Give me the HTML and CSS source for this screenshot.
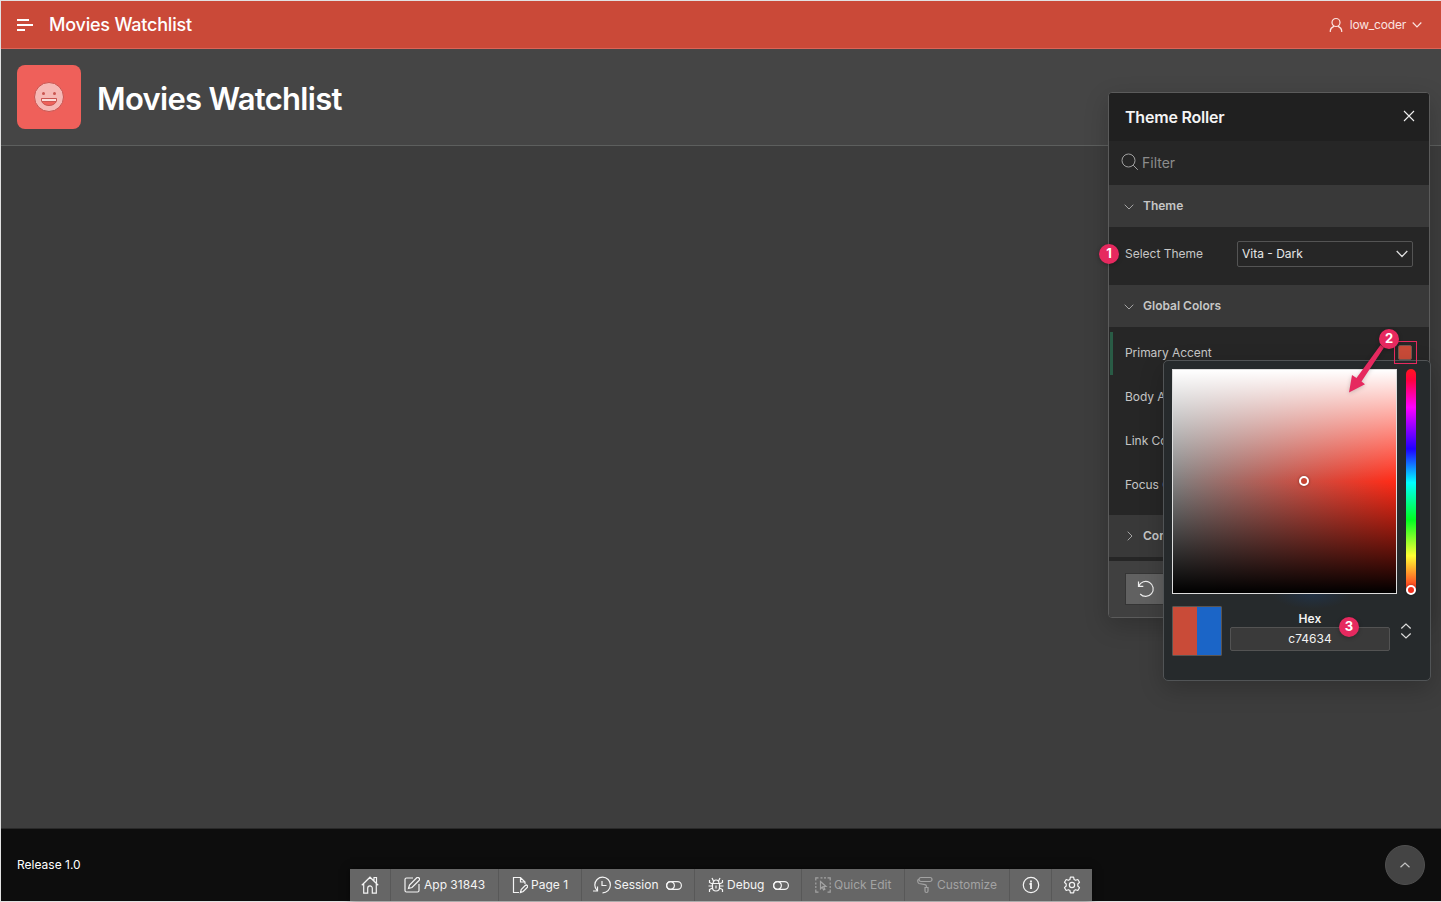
FILE: index.html
```html
<!DOCTYPE html>
<html lang="en">
<head>
<meta charset="utf-8">
<title>Movies Watchlist</title>
<link rel="stylesheet" href="styles.css">
</head>
<body>
<div class="page">
  <header class="topbar">
    <svg class="menu-icon" width="16" height="12" viewBox="0 0 16 12"><path d="M0 1h12M0 6h16M0 11h8" stroke="#fff" stroke-width="2"/></svg>
    <span class="app-name">Movies Watchlist</span>
    <div class="user">
      <svg width="14" height="16" viewBox="0 0 14 16" fill="none" stroke="currentColor" stroke-width="1.200"><circle cx="7" cy="5.500" r="4"/><path d="M1.300 15v-1.300c0-2 1.300-3.300 3.800-4.600M12.700 15v-1.300c0-2-1.300-3.300-3.800-4.600"/></svg>
      <span class="user-name">low_coder</span>
      <svg width="10" height="7" viewBox="0 0 10 7" fill="none" stroke="currentColor" stroke-width="1.200"><path d="M.7 1.500L5 5.800l4.300-4.300"/></svg>
    </div>
  </header>
  <section class="hero">
    <div class="hero-icon">
      <svg width="30" height="30" viewBox="0 0 30 30"><circle cx="15" cy="15" r="14.500" fill="#f6b8b5" stroke="#c95450"/><circle cx="9.500" cy="11.500" r="1.500" fill="#c95450"/><circle cx="20.500" cy="11.500" r="1.500" fill="#c95450"/><path d="M7.500 16.500h15v1.500a7.500 5.500 0 0 1-15 0z" fill="#ef615b" stroke="#c95450"/><path d="M8 17h14v2H8z" fill="#fbdcda"/><path d="M8 19.500h14" stroke="#c95450" stroke-width=".8"/></svg>
    </div>
    <h1 class="hero-title">Movies Watchlist</h1>
  </section>
  <main class="content"></main>
  <footer class="footer">
    <span class="release">Release 1.0</span>
    <button class="to-top"><svg width="10" height="6" viewBox="0 0 10 6" fill="none" stroke="#c4c4c4" stroke-width="1.200"><path d="M.5 5.300L5 1l4.500 4.300"/></svg></button>
  </footer>
</div>

<nav class="devbar">
  <div class="tool tool-home"><svg width="18" height="18" viewBox="0 0 18 18"><path d="M.8 9.300L9 1.200l8.200 8.100M2.700 8v9.200h4v-5a2.300 2.300 0 0 1 4.600 0v5h4V8M13 4.800V1.500h2.500v5.700"/></svg></div>
  <div class="tool tool-app"><svg width="16" height="16" viewBox="0 0 16 16"><path d="M9 1H2.500A1.500 1.500 0 0 0 1 2.500v11A1.500 1.500 0 0 0 2.500 15h11a1.500 1.500 0 0 0 1.500-1.500V7M4.500 11.500l1-3.500 7-7a1.500 1.500 0 0 1 2.500 2.500l-7 7z"/></svg><span>App 31843</span></div>
  <div class="tool tool-page"><svg width="16" height="18" viewBox="0 0 16 18"><path d="M7 16.500H1.500v-15h7L13 6v2M8.500 1.500V6H13M8.500 16.500l.7-3 4-4a1.300 1.300 0 0 1 2 2l-4 4z"/></svg><span>Page 1</span></div>
  <div class="tool tool-session"><svg width="18" height="18" viewBox="0 0 18 18"><path d="M9.500 16.800A7.800 7.800 0 1 0 1.800 9c0 2.200.8 4 2.500 5.700M4.500 10.500v4.500H0M9 5v4.500h4.500"/></svg><span>Session</span><svg class="switch" width="16" height="9" viewBox="0 0 16 9"><rect x=".6" y=".6" width="14.800" height="7.800" rx="3.900"/><circle cx="4.500" cy="4.500" r="3.900"/></svg></div>
  <div class="tool tool-debug"><svg width="16" height="16" viewBox="0 0 16 16"><path d="M4.500 6.500h7v4a3.500 3.500 0 0 1-7 0zM5 6.500a3 3.500 0 0 1 6 0M5.500 4L4 1M10.500 4L12 1M8 8.500v3M.5 9h4M11.500 9h4M1.500 3v2.500l3 1.500M14.500 3v2.500l-3 1.500M1.500 15v-2.500l3-1.500M14.500 15v-2.500l-3-1.500"/></svg><span>Debug</span><svg class="switch" width="16" height="9" viewBox="0 0 16 9"><rect x=".6" y=".6" width="14.800" height="7.800" rx="3.900"/><circle cx="4.500" cy="4.500" r="3.900"/></svg></div>
  <div class="tool tool-quick muted"><svg width="16" height="16" viewBox="0 0 16 16"><path d="M.8 3.500V.8h2.700M5.500.8h2M9 .8h2M12.500.8h2.700v2.700M15.200 5.500v2M15.200 9v2M15.200 12.500v2.700h-2.700M3.500 15.200H.8v-2.700M.8 5.500v2M.8 9v2M5.500 4.500l5.500 5H8.600l1.300 2.800-1.300.6-1.300-2.800-1.800 1.700z"/></svg><span>Quick Edit</span></div>
  <div class="tool tool-custom muted"><svg width="16" height="18" viewBox="0 0 16 18"><rect x="2" y="1.500" width="13" height="4" rx="2"/><path d="M2 3.500H1.500C.3 3.500.5 7 2 7.500L8 8.700q1.500.3 1.500 2v1M8 11.500h3v3.500a1.500 1.500 0 0 1-3 0z"/></svg><span>Customize</span></div>
  <div class="tool tool-info"><svg width="18" height="18" viewBox="0 0 18 18"><circle cx="9" cy="9" r="7.700"/><path d="M7.500 8H9v5M9 4.500v2" stroke-width="1.800"/></svg></div>
  <div class="tool tool-gear"><svg width="18" height="18" viewBox="0 0 18 18"><path stroke-linejoin="round" d="M7.400 1.200h3.200l.5 2.300 1.500.8 2.200-.8 1.700 2.800-1.700 1.700v2l1.700 1.700-1.700 2.800-2.200-.8-1.500.8-.5 2.300H7.400l-.5-2.300-1.500-.8-2.200.8-1.700-2.800L3.200 10V8L1.500 6.300l1.700-2.800 2.200.8 1.500-.8z"/><circle cx="9" cy="9" r="2.600"/></svg></div>
</nav>

<aside class="roller">
  <div class="roller-head"><h2 class="roller-title">Theme Roller</h2><svg class="close" width="12" height="12" viewBox="0 0 12 12" stroke="#eee" stroke-width="1.100"><path d="M1 1l10 10M11 1L1 11"/></svg></div>
  <div class="filter"><svg width="18" height="18" viewBox="0 0 18 18" fill="none" stroke="#a0a0a0"><circle cx="7.500" cy="7.500" r="6.500"/><path d="M12.200 12.200l4.600 4.600"/></svg><span>Filter</span></div>
  <div class="group-head"><svg width="10" height="6" viewBox="0 0 10 6"><path d="M.7.7L5 5 9.300.7"/></svg><span>Theme</span></div>
  <div class="theme-row">
    <label>Select Theme</label>
    <div class="select"><span>Vita - Dark</span><svg width="12" height="8" viewBox="0 0 12 8" fill="none" stroke="#ddd" stroke-width="1.300"><path d="M.7 1L6 6.500 11.300 1"/></svg></div>
  </div>
  <div class="group-head"><svg width="10" height="6" viewBox="0 0 10 6"><path d="M.7.7L5 5 9.300.7"/></svg><span>Global Colors</span></div>
  <div class="colors">
    <div class="color-row changed"><span>Primary Accent</span><i class="chip"></i></div>
    <div class="color-row">Body Accent</div>
    <div class="color-row">Link Color</div>
    <div class="color-row">Focus Color</div>
  </div>
  <div class="group-head closed"><svg width="6" height="10" viewBox="0 0 6 10"><path d="M.7.7L5 5 .7 9.300"/></svg><span>Containers</span></div>
  <div class="roller-foot"><div class="reset"><svg width="18" height="18" viewBox="0 0 18 18" fill="none" stroke="#eee" stroke-width="1.200"><path d="M1.500 1.500v4.800h4.800M1.800 6A7.500 7.500 0 1 1 3.200 14"/></svg></div></div>
</aside>

<div class="picker">
  <div class="picker-top">
    <div class="shade"><i class="handle shade-handle"></i></div>
    <div class="hue"><i class="handle hue-handle"></i></div>
  </div>
  <div class="picker-bottom">
    <div class="compare"><i class="new-color"></i><i class="old-color"></i></div>
    <div class="hex"><b>Hex</b><div class="hex-input">c74634</div></div>
    <svg class="mode" width="12" height="16" viewBox="0 0 12 16" fill="none" stroke="#ddd" stroke-width="1.200"><path d="M1.300 5.500L6 1l4.700 4.500M1.300 10.500L6 15l4.700-4.500"/></svg>
  </div>
</div>

<div class="mark-box"></div>
<svg class="arrow" width="60" height="70" viewBox="0 0 60 70"><path d="M40.500 10L44 12.500 21.500 46.500 25 49.300 9 57.500 12 40 16.500 43z" fill="#e6295f"/></svg>
<div class="badge badge-1">1</div>
<div class="badge badge-2">2</div>
<div class="badge badge-3">3</div>
</body>
</html>
```
FILE: styles.css
```css
* { box-sizing: border-box; }
body { margin: 0; width: 1441px; height: 902px; position: relative; overflow: hidden; font-family: Inter, "Open Sans", sans-serif; font-size: 12px; color: #fff; }
svg { display: block; flex: none; }
.page { height: 902px; display: flex; flex-direction: column; border: solid #e2e2e2; border-width: 1px 0 1px 1px; background: #3d3d3d; }
.topbar { height: 48px; display: flex; align-items: center; padding: 0 19px 0 16px; background: #ca4938; border-bottom: 1px solid #dc6457; }
.menu-icon { margin: 1px 16px 0 0; }
.app-name { font-size: 18px; font-weight: 500; letter-spacing: -.21px; }
.user { margin-left: auto; display: flex; align-items: center; color: #fbe4e1; }
.user-name { margin: 0 6px 0 7px; letter-spacing: -.2px; }
.hero { height: 97px; display: flex; align-items: center; gap: 16px; padding: 0 16px; background: #454545; border-bottom: 1px solid #5d5f5e; }
.hero-icon { width: 64px; height: 64px; border-radius: 8px; background: #ef605a; display: flex; align-items: center; justify-content: center; }
.hero-title { margin: 0; padding-top: 2px; font-size: 31px; font-weight: 600; letter-spacing: -.7px; }
.content { flex: 1; }
.footer { height: 73px; display: flex; align-items: center; justify-content: space-between; padding: 0 16px; background: #0d0d0d; border-top: 1px solid #292929; }
.release { padding-bottom: 2px; }
.to-top { width: 40px; height: 40px; padding: 0; border-radius: 50%; border: 1px solid #505050; background: #444; display: flex; align-items: center; justify-content: center; }

.devbar { position: absolute; left: 350px; top: 869px; width: 742px; height: 32px; display: flex; background: #666; color: #f4f4f4; font-size: 12px; box-shadow: 0 0 8px #0008; }
.tool { display: flex; align-items: center; border-right: 1px solid #585858; padding-left: 13px; gap: 4px; }
.tool svg { fill: none; stroke: currentColor; stroke-width: 1.2; }
.tool span { padding-bottom: 2px; }
.muted { color: #a3a3a3; }
.tool-home { width: 41px; padding-left: 11px; }
.tool-app { width: 108px; }
.tool-page { width: 83px; gap: 3px; }
.tool-session { width: 113px; padding-left: 11px; gap: 3px; }
.tool-debug { width: 107px; gap: 3px; }
.tool-quick { width: 103px; gap: 3px; }
.tool-custom { width: 105px; padding-left: 12px; }
.tool-info { width: 42px; padding-left: 12px; }
.tool-gear { width: 40px; padding-left: 11px; border: 0; }
.tool .switch { margin-left: 4px; }
.tool-debug .switch { margin-left: 6px; }

.roller { position: absolute; left: 1108px; top: 92px; width: 322px; height: 526px; border: 1px solid #5b5b5b; border-radius: 4px; background: #262626; overflow: hidden; box-shadow: 0 8px 24px #0003; color: #c6c6c6; }
.roller-head { height: 48px; display: flex; align-items: center; justify-content: space-between; padding: 0 14px 0 16px; background: #202020; }
.close { margin-bottom: 2px; }
.roller-title { margin: 0; font-size: 16px; font-weight: 600; letter-spacing: -.2px; color: #f4f4f4; }
.filter { height: 44px; display: flex; align-items: center; gap: 3px; padding: 0 0 1px 12px; font-size: 14px; color: #8c8c8c; }
.filter svg { margin-top: -2px; }
.group-head { height: 42px; display: flex; align-items: center; gap: 9px; padding-left: 15px; background: #393939; font-weight: 600; }
.group-head span { padding-bottom: 2px; }
.group-head svg { fill: none; stroke: #a4a4a4; margin-top: 1px; }
.theme-row { height: 58px; display: flex; align-items: flex-start; justify-content: space-between; padding: 14px 16px 0; }
.theme-row label { line-height: 26px; }
.select { width: 176px; height: 26px; display: flex; align-items: center; justify-content: space-between; padding: 0 4px; border: 1px solid #545454; border-radius: 2px; color: #e7e7e7; }
.select span { padding-bottom: 1px; }
.colors { height: 188px; padding-top: 4px; }
.color-row { height: 44px; display: flex; align-items: center; justify-content: space-between; padding: 0 17px 1px 16px; letter-spacing: -.05px; }
.changed { position: relative; }
.changed::before { content: ""; position: absolute; left: 1px; top: 1px; width: 3px; height: 43px; background: #295b45; }
.chip { width: 14px; height: 15px; border: 1px solid #765550; border-radius: 2px; background: #c94b38; }
.closed { gap: 10px; padding-left: 18px; }
.group-head.closed svg { margin-top: 0; }
.roller-foot { margin-top: 4px; height: 57px; padding: 12px 16px; background: #404040; }
.reset { width: 41px; height: 32px; display: flex; align-items: center; justify-content: center; background: #616161; border: 1px solid #353535; }

.picker { position: absolute; left: 1163px; top: 360px; width: 268px; height: 321px; padding: 8px 14px 8px 8px; border: 1px solid #515456; border-radius: 5px; background: radial-gradient(40px 16px at 148px 232px, #213246, #21324600), #262a2c; box-shadow: 0 8px 24px #0003; }
.picker-top { display: flex; gap: 9px; }
.shade { position: relative; width: 225px; height: 225px; border: 1px solid #ddd; background: linear-gradient(#fff, #fff0 50%, #0000 50%, #000), linear-gradient(90deg, #808080, #ff2b17); }
.hue { position: relative; width: 10px; height: 225px; border-radius: 5px; background: linear-gradient(#ff1720, #ff0040 5%, #f0f 17%, #2000ff 35.500%, #0ff 50.500%, #0f2 67%, #ff3 83%, #ff3020 98%); }
.handle { position: absolute; width: 10px; height: 10px; border: 2px solid #fff; border-radius: 50%; box-shadow: 0 0 3px #0006; }
.shade-handle { left: 126px; top: 106px; background: #c74634; }
.hue-handle { left: 0; top: 216px; background: #f4301e; }
.picker-bottom { display: flex; padding-top: 12px; }
.compare { width: 50px; height: 50px; display: flex; border: 1px solid #5a5552; border-radius: 1px; }
.compare i { flex: 1; }
.new-color { background: #c94b38; }
.old-color { background: #1b65c7; }
.hex { width: 160px; margin-left: 8px; padding-top: 5px; text-align: center; color: #f2f2f2; }
.hex b { display: block; font-weight: 600; line-height: 16px; letter-spacing: .2px; }
.hex-input { height: 24px; line-height: 22px; border: 1px solid #535353; border-radius: 2px; background: #3a3a3a; }
.mode { margin: 17px 0 0 10px; }

.mark-box { position: absolute; left: 1394px; top: 341px; width: 23px; height: 23px; border: 1px solid #e6295f; }
.arrow { position: absolute; left: 1340px; top: 335px; filter: drop-shadow(0 1px 2px #0003); }
.badge { position: absolute; width: 20px; height: 20px; border-radius: 50%; background: #e6295f; font-size: 13px; font-weight: 700; line-height: 19px; text-align: center; box-shadow: 0 1px 4px #0004; }
.badge-1 { left: 1099px; top: 244px; }
.badge-2 { left: 1379px; top: 329px; }
.badge-3 { left: 1339px; top: 617px; }
```
